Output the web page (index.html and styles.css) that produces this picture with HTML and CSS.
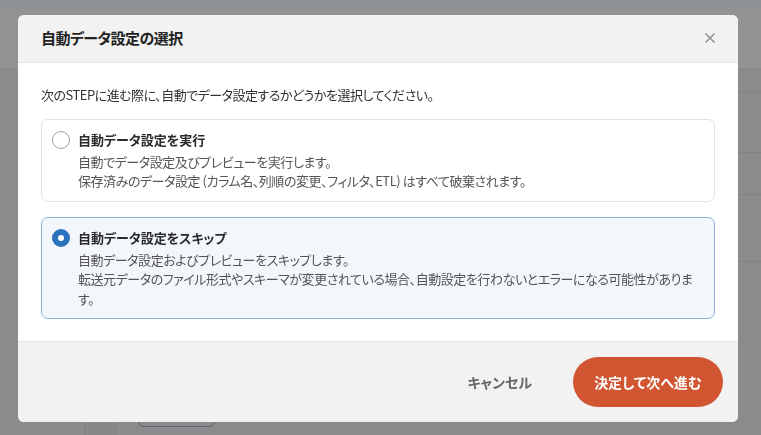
FILE: index.html
```html
<!DOCTYPE html>
<html lang="ja">
<head>
<meta charset="utf-8">
<link rel="stylesheet" href="styles.css">
<title>自動データ設定の選択</title>
</head>
<body>
<div class="page">
  <div class="topbar"></div>
  <div class="pagehead"></div>
  <div class="main">
    <div class="nav"></div>
    <div class="subnav"></div>
    <div class="content">
      <div class="row r1"></div>
      <div class="row r2"></div>
      <div class="row r3"></div>
      <div class="row r4"></div>
      <div class="spacer"></div>
      <div class="ghost-btn"></div>
    </div>
  </div>
</div>

<div class="overlay">
  <div class="modal" role="dialog">
    <div class="modal-header">
      <h2 class="modal-title">自動データ設定の選択</h2>
      <button class="close" aria-label="閉じる">
        <svg width="10" height="10" viewBox="0 0 10 10"><path d="M0.5 0.5 L9.5 9.5 M9.5 0.5 L0.5 9.5" stroke="#8a8a8a" stroke-width="1.4" fill="none"/></svg>
      </button>
    </div>
    <div class="modal-body">
      <p class="intro">次のSTEPに進む際に、自動でデータ設定するかどうかを選択してください。</p>
      <label class="option">
        <span class="radio"></span>
        <span class="opt-text">
          <span class="opt-title">自動データ設定を実行</span>
          <span class="opt-desc">自動でデータ設定及びプレビューを実行します。<br>保存済みのデータ設定 (カラム名、列順の変更、フィルタ、ETL) はすべて破棄されます。</span>
        </span>
      </label>
      <label class="option selected">
        <span class="radio checked"></span>
        <span class="opt-text">
          <span class="opt-title">自動データ設定をスキップ</span>
          <span class="opt-desc">自動データ設定およびプレビューをスキップします。<br>転送元データのファイル形式やスキーマが変更されている場合、自動設定を行わないとエラーになる可能性があります。</span>
        </span>
      </label>
    </div>
    <div class="modal-footer">
      <button class="btn-cancel">キャンセル</button>
      <button class="btn-primary">決定して次へ進む</button>
    </div>
  </div>
</div>
</body>
</html>
```
FILE: styles.css
```css
* { box-sizing: border-box; }
html, body { margin: 0; padding: 0; }
body {
  width: 761px;
  height: 435px;
  overflow: hidden;
  background: #8b8b8b;
  font-family: "Noto Sans CJK JP", "Noto Sans", sans-serif;
  font-feature-settings: "palt";
}

/* dimmed page behind */
.page { height: 435px; display: flex; flex-direction: column; }
.topbar { height: 10px; background: #8f9295; }
.pagehead { height: 59px; background: #939393; border-bottom: 1px solid #878787; }
.main { flex: 1; display: flex; }
.nav { width: 85px; background: #8c8c8c; border-right: 1px solid #828282; }
.subnav { width: 31px; background: #888888; border-right: 1px solid #828282; }
.content { flex: 1; display: flex; flex-direction: column; padding-left: 22px; }
.row { border-bottom: 1px solid #828282; margin-left: -22px; }
.r1 { height: 24px; }
.r2 { height: 60px; }
.r3 { height: 42px; }
.r4 { height: 67px; }
.spacer { flex: 1; }
.ghost-btn {
  width: 77px; height: 30px; margin-bottom: 8px;
  border: 1px solid #5b6877; border-radius: 6px;
}

/* modal */
.overlay {
  position: fixed; inset: 0;
  padding: 15px 0 0 18px;
}
.modal {
  width: 720px;
  height: 407px;
  border-radius: 6px;
  background: #fff;
  overflow: hidden;
  display: flex; flex-direction: column;
}
.modal-header {
  height: 48px;
  background: #f2f2f2;
  border-bottom: 1px solid #e4e4e4;
  display: flex; align-items: center; justify-content: space-between;
  padding: 0 23px;
}
.modal-title {
  margin: 0;
  font-size: 15px;
  font-weight: 700;
  letter-spacing: -0.55px;
  color: #222;
  line-height: 20px;
}
.close {
  border: 0; background: none; padding: 0;
  width: 10px; height: 10px; display: flex;
  cursor: pointer;
}

.modal-body {
  flex: 1;
  padding: 22px 23px 22px;
  display: flex; flex-direction: column;
}
.intro {
  margin: 0 0 14px;
  font-size: 13px;
  letter-spacing: -0.5px;
  line-height: 20px;
  color: #333;
}
.option {
  display: flex; gap: 8px;
  align-items: flex-start;
  border: 1px solid #e2e2e2;
  border-radius: 7px;
  padding: 10px 16px 10px 10px;
  background: #fff;
}
.option + .option { margin-top: 15px; }
.option.selected {
  background: #f3f7fc;
  border-color: #8fb1dc;
}
.radio {
  flex: none;
  width: 18px; height: 18px;
  margin-top: 1px;
  border-radius: 50%;
  border: 1.5px solid #a0a0a0;
  background: #fff;
}
.radio.checked {
  border: 6px solid #2c73bf;
  background: #fff;
}
.opt-text { display: flex; flex-direction: column; }
.opt-title {
  font-size: 13px; font-weight: 700;
  line-height: 20px;
  color: #2a2a2a;
  margin-bottom: 2px;
}
.opt-desc {
  font-size: 13px;
  letter-spacing: -0.45px;
  line-height: 19.5px;
  color: #555;
}

.modal-footer {
  height: 81px;
  background: #f2f2f2;
  border-top: 1px solid #e4e4e4;
  display: flex; align-items: center; justify-content: flex-end;
  padding: 0 15px;
  gap: 21px;
}
.btn-cancel {
  border: 0; background: none;
  font-family: inherit; font-feature-settings: "palt";
  font-size: 14px; font-weight: 700;
  color: #666;
  padding: 0 20px;
  height: 50px;
}
.btn-primary {
  border: 0;
  width: 150px; height: 50px;
  border-radius: 25px;
  background: #d05530;
  color: #fff;
  font-family: inherit; font-feature-settings: "palt";
  font-size: 14px; font-weight: 700;
}
```
